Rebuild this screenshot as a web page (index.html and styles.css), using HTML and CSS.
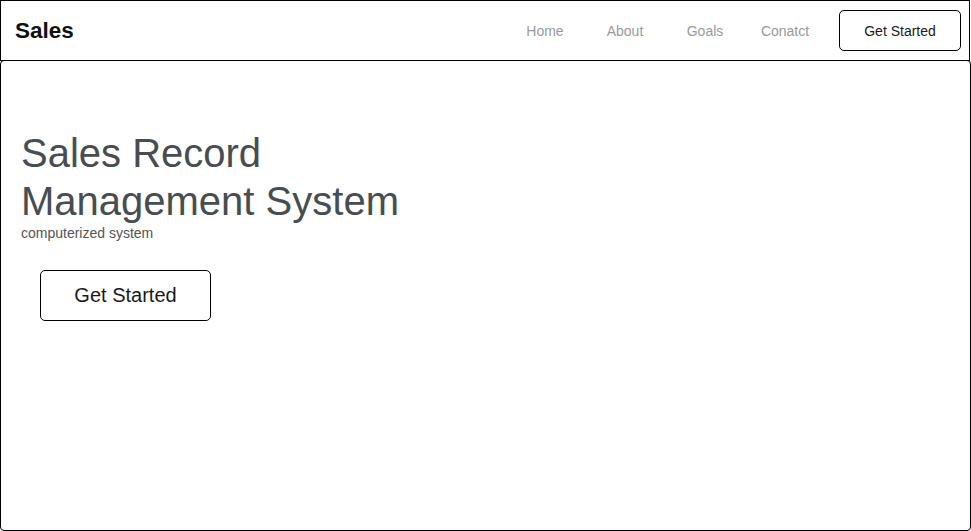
FILE: index.html
```html
<!DOCTYPE html>
<html>
<head>
<meta charset="utf-8">
<link rel="stylesheet" href="styles.css">
</head>
<body>
<header class="topbar">
  <div class="logo">Sales</div>
  <nav class="nav">
    <a class="nav-link">Home</a>
    <a class="nav-link">About</a>
    <a class="nav-link">Goals</a>
    <a class="nav-link">Conatct</a>
  </nav>
  <button class="btn btn-small">Get Started</button>
</header>
<main class="hero">
  <h1 class="hero-title">Sales Record<br>Management System</h1>
  <p class="hero-sub">computerized system</p>
  <button class="btn btn-large">Get Started</button>
</main>
</body>
</html>
```
FILE: styles.css
```css
* { box-sizing: border-box; }
html, body { margin: 0; padding: 0; background: #fff; }
body { font-family: "Liberation Sans", Arial, sans-serif; width: 971px; height: 531px; overflow: hidden; }

.topbar {
  display: flex;
  align-items: center;
  width: 970px;
  height: 61px;
  border: 1px solid #000;
  position: relative;
  z-index: 1;
}
.logo {
  font-weight: bold;
  font-size: 22.5px;
  color: #111;
  padding-left: 14px;
}
.nav {
  margin-left: auto;
  display: flex;
}
.nav-link {
  width: 80px;
  text-align: center;
  font-size: 14px;
  color: #9a9a9a;
  cursor: pointer;
}
.btn {
  font-family: "Liberation Sans", Arial, sans-serif;
  background: #fff;
  border: 1px solid #000;
  border-radius: 5px;
  color: #1a1a1a;
  cursor: pointer;
  padding: 0;
}
.btn-small {
  width: 122px;
  height: 41px;
  font-size: 14px;
  margin-left: 14px;
  margin-right: 8px;
}
.hero {
  width: 971px;
  height: 471px;
  margin-top: -1px;
  border: 1px solid #000;
  border-radius: 4px;
  padding: 0 0 0 20px;
  overflow: hidden;
}
.hero-title {
  margin: 68px 0 0 0;
  font-size: 40px;
  line-height: 48px;
  font-weight: normal;
  color: #474d50;
}
.hero-sub {
  margin: 0;
  font-size: 14px;
  line-height: 16px;
  color: #555;
}
.btn-large {
  margin: 29px 0 0 19px;
  width: 171px;
  height: 51px;
  font-size: 20px;
}
```
